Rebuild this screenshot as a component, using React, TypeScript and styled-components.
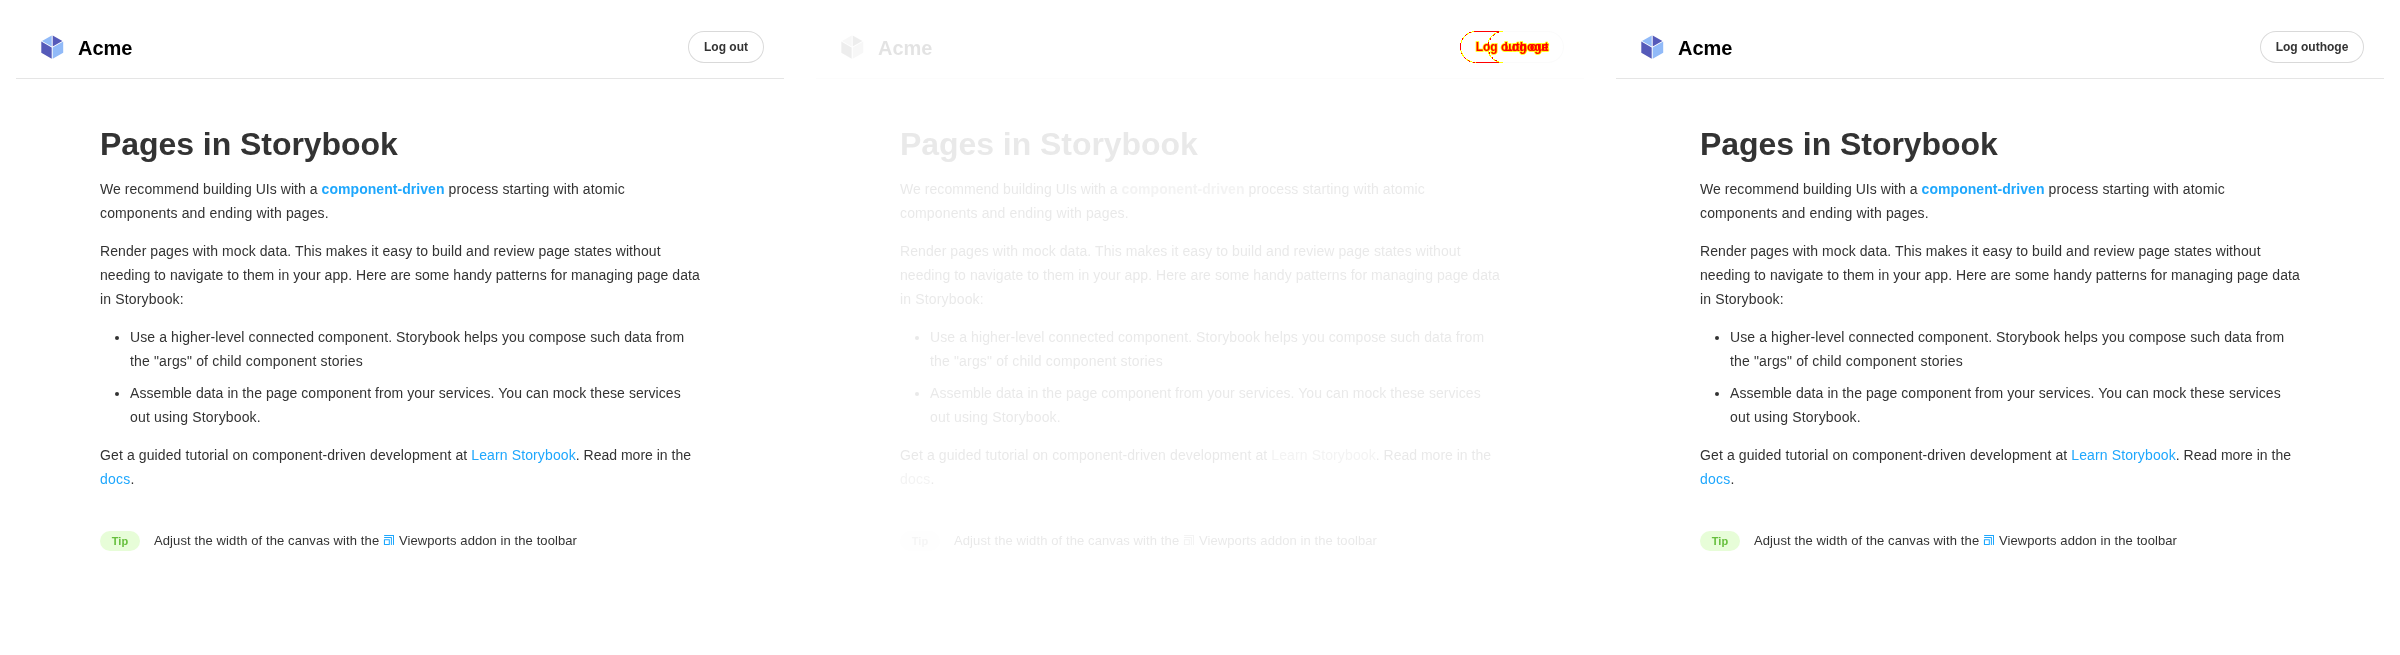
import React from "react";
import styled, { createGlobalStyle, css } from "styled-components";

const GlobalStyle = createGlobalStyle`
  body { margin: 0; background: #fff; }
`;

const Comparison = styled.main`
  display: grid;
  grid-template-columns: repeat(3, 768px);
  column-gap: 32px;
  box-sizing: border-box;
  width: 2400px;
  height: 655px;
  padding: 16px;
  overflow: hidden;
  font-family: "Liberation Sans", Arial, sans-serif;
  color: #333;
`;

const Pane = styled.div`
  position: relative;
`;

const Snapshot = styled.div<{ $faded?: boolean }>`
  ${(p) => p.$faded && css`filter: grayscale(1) opacity(0.11);`}
`;

const Header = styled.header`
  display: flex;
  align-items: center;
  justify-content: space-between;
  height: 32px;
  padding: 15px 20px;
  border-bottom: 1px solid rgba(0, 0, 0, 0.1);
`;

const Brand = styled.div`
  display: flex;
  align-items: center;
  gap: 10px;
`;

const BrandName = styled.h1`
  margin: 0;
  padding-top: 2px;
  font-size: 20px;
  line-height: 20px;
  font-weight: 700;
  color: #000;
`;

const Button = styled.button<{ $width: number }>`
  box-sizing: border-box;
  width: ${(p) => p.$width}px;
  height: 32px;
  padding: 0;
  border: 0;
  border-radius: 3em;
  background: transparent;
  box-shadow: rgba(0, 0, 0, 0.15) 0 0 0 1px inset;
  color: #333;
  font: 700 12px/12px "Liberation Sans", Arial, sans-serif;
  white-space: nowrap;
`;

const Article = styled.section`
  width: 600px;
  margin: 0 auto;
  padding: 48px 20px;
  font-size: 14px;
  line-height: 24px;
`;

const Title = styled.h2`
  margin: 0 0 17px;
  padding-top: 1px;
  font-size: 32px;
  line-height: 32px;
  font-weight: 700;
  letter-spacing: -0.05px;
`;

const Paragraph = styled.p`
  margin: 0 0 14px;
`;

const Line = styled.span`
  display: block;
  white-space: pre;
`;

const Run = styled.span<{ $track: number }>`
  letter-spacing: ${(p) => p.$track}px;
`;

const Link = styled.a<{ $track: number; $bold?: boolean }>`
  color: #1ea7fd;
  font-weight: ${(p) => (p.$bold ? 700 : 400)};
  letter-spacing: ${(p) => p.$track}px;
`;

const List = styled.ul`
  margin: 0 0 14px;
  padding-left: 30px;
`;

const Item = styled.li`
  & + & { margin-top: 8px; }
`;

const TipRow = styled.div`
  display: flex;
  margin-top: 40px;
  font-size: 13px;
  line-height: 20px;
  white-space: pre;
`;

const TipBadge = styled.span`
  box-sizing: border-box;
  width: 40px;
  height: 20px;
  margin-right: 14px;
  padding: 4px 0;
  border-radius: 3em;
  background: #e7fdd8;
  color: #66bf3c;
  font-size: 11px;
  font-weight: 700;
  line-height: 12px;
  text-align: center;
`;

const TipLead = styled.span`
  width: 229px;
  letter-spacing: 0.106px;
`;

const ViewportGlyph = styled.svg`
  width: 12px;
  height: 12px;
  margin: 3px 4px 0 0;
`;

const DiffMark = styled.svg`
  position: absolute;
  top: 11px;
  right: 16px;
  width: 112px;
  height: 40px;
  font: 700 12px "Liberation Sans", Arial, sans-serif;
`;

const DiffLabel = styled.text`
  fill: #f00;
  stroke: #ff0;
  stroke-width: 1.6px;
  paint-order: stroke;
  mix-blend-mode: multiply;
`;

const Logo = () => (
  <svg width="32" height="32" viewBox="0 0 32 32">
    <path d="M5.3 10.6l10.4 6v11.1l-10.4-6v-11zm11.4-6.2l9.7 5.5-9.7 5.6V4.4z" fill="#555AB9" />
    <path d="M27.2 10.6v11.2l-10.5 6V16.5l10.5-6zM15.7 4.4v11L6 10l9.7-5.5z" fill="#91BAF8" />
  </svg>
);

/* Changed pixels: both button outlines and both labels over each other. */
const ButtonDiff = () => (
  <DiffMark viewBox="0 0 112 40">
    <g fill="none" stroke="#ff0" shapeRendering="crispEdges">
      <path d="M47 4.5H20A15.5 15.5 0 0 0 20 35.5H47" />
      <path d="M47 4.5A15.5 15.5 0 0 0 47 35.5" />
    </g>
    <g fill="none" stroke="#f00" shapeRendering="crispEdges">
      <path d="M20 4.5H43M20 35.5H43M4.5 17V23M32.5 17V23" />
      <path d="M20 4.5A15.5 15.5 0 0 0 20 35.5M43 5.2A15.5 15.5 0 0 0 43 34.8" strokeDasharray="2 3" />
    </g>
    <DiffLabel x="48.5" y="24">Log out</DiffLabel>
    <DiffLabel x="19.7" y="24">Log outhoge</DiffLabel>
  </DiffMark>
);

type PageProps = { action?: string; actionWidth: number; faded?: boolean };

const Page = ({ action, actionWidth, faded }: PageProps) => (
  <Snapshot $faded={faded}>
    <Header>
      <Brand>
        <Logo />
        <BrandName>Acme</BrandName>
      </Brand>
      <Button $width={actionWidth}>{action}</Button>
    </Header>
    <Article>
      <Title>Pages in Storybook</Title>
      <Paragraph>
        <Line>
          <Run $track={0.05}>{"We recommend building UIs with a "}</Run>
          <Link $bold $track={0.05}>component-driven</Link>
          <Run $track={0.127}>{" process starting with atomic"}</Run>
        </Line>
        <Line><Run $track={0.14}>components and ending with pages.</Run></Line>
      </Paragraph>
      <Paragraph>
        <Line><Run $track={0.078}>Render pages with mock data. This makes it easy to build and review page states without</Run></Line>
        <Line><Run $track={0.056}>needing to navigate to them in your app. Here are some handy patterns for managing page data</Run></Line>
        <Line><Run $track={0.16}>in Storybook:</Run></Line>
      </Paragraph>
      <List>
        <Item>
          <Line><Run $track={0.096}>Use a higher-level connected component. Storybook helps you compose such data from</Run></Line>
          <Line><Run $track={0.16}>the "args" of child component stories</Run></Line>
        </Item>
        <Item>
          <Line><Run $track={0.063}>Assemble data in the page component from your services. You can mock these services</Run></Line>
          <Line><Run $track={0.16}>out using Storybook.</Run></Line>
        </Item>
      </List>
      <Paragraph>
        <Line>
          <Run $track={0.11}>{"Get a guided tutorial on component-driven development at "}</Run>
          <Link $track={0.12}>Learn Storybook</Link>
          <Run $track={0}>. Read more in the</Run>
        </Line>
        <Line><Link $track={0.2}>docs</Link>.</Line>
      </Paragraph>
      <TipRow>
        <TipBadge>Tip</TipBadge>
        <TipLead>{"Adjust the width of the canvas with the "}</TipLead>
        <ViewportGlyph viewBox="0 0 12 12">
          <path d="M1.5 5.2h4.8c.3 0 .5.2.5.4v5.1c-.1.2-.3.3-.4.3H1.4a.5.5 0 01-.5-.4V5.7c0-.3.2-.5.5-.5zm0-2.1h6.9c.3 0 .5.2.5.4v7a.5.5 0 01-1 0V4H1.5a.5.5 0 010-1zm0-2.1h9c.3 0 .5.2.5.4v9.1a.5.5 0 01-1 0V2H1.5a.5.5 0 010-1zm4.3 5.2H2V10h3.8V6.2z" fill="#1ea7fd" />
        </ViewportGlyph>
        <Run $track={0.087}>Viewports addon in the toolbar</Run>
      </TipRow>
    </Article>
  </Snapshot>
);

export default function App() {
  return (
    <>
      <GlobalStyle />
      <Comparison>
        <Pane><Page action="Log out" actionWidth={76} /></Pane>
        <Pane>
          <Page actionWidth={104} faded />
          <ButtonDiff />
        </Pane>
        <Pane><Page action="Log outhoge" actionWidth={104} /></Pane>
      </Comparison>
    </>
  );
}
